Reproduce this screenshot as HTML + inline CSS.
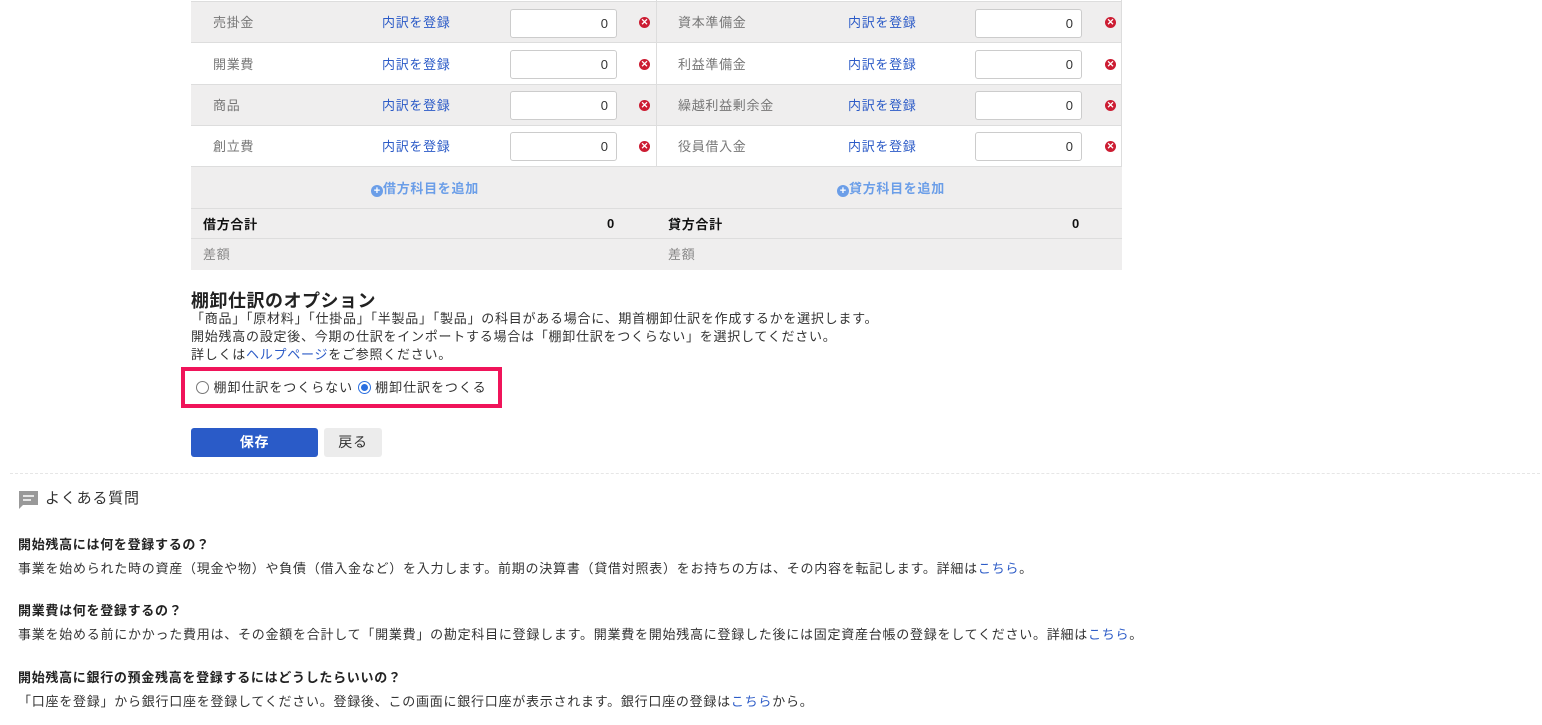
<!DOCTYPE html>
<html><head><meta charset="utf-8"><style>
*{margin:0;padding:0;box-sizing:border-box}
body{width:1542px;height:725px;overflow:hidden;background:#fff;font-family:"Liberation Sans","Noto Sans CJK JP",sans-serif;font-size:13px;color:#333;position:relative;letter-spacing:0.7px}
.a{position:absolute;white-space:nowrap}
.row{position:absolute;left:191px;width:931px;height:41px;border-bottom:1px solid #ddd}
.g{background:#efeeee}.w{background:#fff}
.lbl{color:#777;line-height:41px}
.lnk{color:#2c5bc7;line-height:41px}
.inp{position:absolute;width:107px;height:29px;background:#fff;border:1px solid #ccc;border-radius:3px;text-align:right;padding-right:8px;line-height:27px;color:#333;font-size:13px;letter-spacing:0}
.x{position:absolute;width:11px;height:11px;border-radius:50%;background:#cc1c32;color:#fff;font-size:9px;line-height:11px;text-align:center;font-weight:bold;letter-spacing:0}
.vl{position:absolute;left:656px;top:0;width:1px;background:#ddd}
a{color:#2c5bc7;text-decoration:none}
</style></head><body>
<div class="row w" style="top:-39px"></div>
<div class="row g" style="top:2px"></div>
<div class="row w" style="top:44px"></div>
<div class="row g" style="top:85px"></div>
<div class="row w" style="top:126px"></div>
<div class="row g" style="top:167px;height:42px"></div>
<div class="row g" style="top:209px;height:30px"></div>
<div class="row g" style="top:239px;height:31px;border:none"></div>
<div class="vl" style="height:167px"></div>
<div class="a" style="left:1121px;top:0;width:1px;height:167px;background:#ddd"></div>

<div class="a lbl" style="left:213px;top:2px">売掛金</div><div class="a lnk" style="left:382px;top:2px">内訳を登録</div><div class="inp" style="left:510px;top:9px">0</div><div class="x" style="left:639px;top:17px">✕</div>
<div class="a lbl" style="left:213px;top:44px">開業費</div><div class="a lnk" style="left:382px;top:44px">内訳を登録</div><div class="inp" style="left:510px;top:50px">0</div><div class="x" style="left:639px;top:59px">✕</div>
<div class="a lbl" style="left:213px;top:85px">商品</div><div class="a lnk" style="left:382px;top:85px">内訳を登録</div><div class="inp" style="left:510px;top:91px">0</div><div class="x" style="left:639px;top:100px">✕</div>
<div class="a lbl" style="left:213px;top:126px">創立費</div><div class="a lnk" style="left:382px;top:126px">内訳を登録</div><div class="inp" style="left:510px;top:132px">0</div><div class="x" style="left:639px;top:141px">✕</div>

<div class="a lbl" style="left:678px;top:2px">資本準備金</div><div class="a lnk" style="left:848px;top:2px">内訳を登録</div><div class="inp" style="left:975px;top:9px">0</div><div class="x" style="left:1105px;top:17px">✕</div>
<div class="a lbl" style="left:678px;top:44px">利益準備金</div><div class="a lnk" style="left:848px;top:44px">内訳を登録</div><div class="inp" style="left:975px;top:50px">0</div><div class="x" style="left:1105px;top:59px">✕</div>
<div class="a lbl" style="left:678px;top:85px">繰越利益剰余金</div><div class="a lnk" style="left:848px;top:85px">内訳を登録</div><div class="inp" style="left:975px;top:91px">0</div><div class="x" style="left:1105px;top:100px">✕</div>
<div class="a lbl" style="left:678px;top:126px">役員借入金</div><div class="a lnk" style="left:848px;top:126px">内訳を登録</div><div class="inp" style="left:975px;top:132px">0</div><div class="x" style="left:1105px;top:141px">✕</div>

<div class="a" style="left:371px;top:178px;color:#6b9ee8;font-weight:bold"><span style="display:inline-block;width:12px;height:12px;border-radius:50%;background:#6b9ee8;color:#fff;font-size:11px;line-height:12px;text-align:center;vertical-align:-1px;letter-spacing:0">+</span>借方科目を追加</div>
<div class="a" style="left:837px;top:178px;color:#6b9ee8;font-weight:bold"><span style="display:inline-block;width:12px;height:12px;border-radius:50%;background:#6b9ee8;color:#fff;font-size:11px;line-height:12px;text-align:center;vertical-align:-1px;letter-spacing:0">+</span>貸方科目を追加</div>

<div class="a" style="left:203px;top:214px;font-weight:bold;color:#111">借方合計</div>
<div class="a" style="left:607px;top:216px;font-weight:bold;color:#111">0</div>
<div class="a" style="left:668px;top:214px;font-weight:bold;color:#111">貸方合計</div>
<div class="a" style="left:1072px;top:216px;font-weight:bold;color:#111">0</div>
<div class="a" style="left:203px;top:244px;color:#888">差額</div>
<div class="a" style="left:668px;top:244px;color:#888">差額</div>

<div class="a" style="left:191px;top:287px;font-size:18px;font-weight:bold;color:#222;letter-spacing:0.5px">棚卸仕訳のオプション</div>
<div class="a" style="left:191px;top:310px;font-size:13px;line-height:18px;color:#333;letter-spacing:0.75px">「商品」「原材料」「仕掛品」「半製品」「製品」の科目がある場合に、期首棚卸仕訳を作成するかを選択します。<br>開始残高の設定後、今期の仕訳をインポートする場合は「棚卸仕訳をつくらない」を選択してください。<br>詳しくは<a>ヘルプページ</a>をご参照ください。</div>
<div class="a" style="left:181px;top:367px;width:321px;height:41px;border:4px solid #f0145a"></div>
<div class="a" style="left:196px;top:377px;font-size:13px;letter-spacing:0.95px"><span style="display:inline-block;width:13px;height:13px;border:1px solid #777;border-radius:50%;vertical-align:-2px"></span> 棚卸仕訳をつくらない <span style="display:inline-block;width:13px;height:13px;border:1px solid #2a6fe0;border-radius:50%;vertical-align:-2px;position:relative"><span style="position:absolute;left:2px;top:2px;width:7px;height:7px;border-radius:50%;background:#2a6fe0"></span></span> 棚卸仕訳をつくる</div>

<div class="a" style="left:191px;top:428px;width:127px;height:29px;background:#2a5bc8;border-radius:3px;color:#fff;font-weight:bold;text-align:center;line-height:29px;font-size:14px">保存</div>
<div class="a" style="left:324px;top:428px;width:58px;height:29px;background:#ececec;border-radius:3px;color:#333;text-align:center;line-height:29px;font-size:14px">戻る</div>

<div class="a" style="left:10px;top:473px;width:1530px;border-top:1px dashed #e6e6e6"></div>
<svg class="a" style="left:18px;top:490px" width="21" height="21" viewBox="0 0 21 21"><path d="M1 1h19v14H5l-4 4z" fill="#999"/><path d="M5 6h11M5 10h8" stroke="#fff" stroke-width="1.6"/></svg>
<div class="a" style="left:45px;top:487px;font-size:15px;color:#333;letter-spacing:0.8px">よくある質問</div>

<div class="a" style="left:18px;top:534px;font-weight:bold;color:#222">開始残高には何を登録するの？</div>
<div class="a" style="left:18px;top:558px;font-size:13px;letter-spacing:0.75px">事業を始められた時の資産（現金や物）や負債（借入金など）を入力します。前期の決算書（貸借対照表）をお持ちの方は、その内容を転記します。詳細は<a>こちら</a>。</div>
<div class="a" style="left:18px;top:600px;font-weight:bold;color:#222">開業費は何を登録するの？</div>
<div class="a" style="left:18px;top:624px;font-size:13px;letter-spacing:0.75px">事業を始める前にかかった費用は、その金額を合計して「開業費」の勘定科目に登録します。開業費を開始残高に登録した後には固定資産台帳の登録をしてください。詳細は<a>こちら</a>。</div>
<div class="a" style="left:18px;top:667px;font-weight:bold;color:#222">開始残高に銀行の預金残高を登録するにはどうしたらいいの？</div>
<div class="a" style="left:18px;top:691px;font-size:13px;letter-spacing:0.75px">「口座を登録」から銀行口座を登録してください。登録後、この画面に銀行口座が表示されます。銀行口座の登録は<a>こちら</a>から。</div>
</body></html>
